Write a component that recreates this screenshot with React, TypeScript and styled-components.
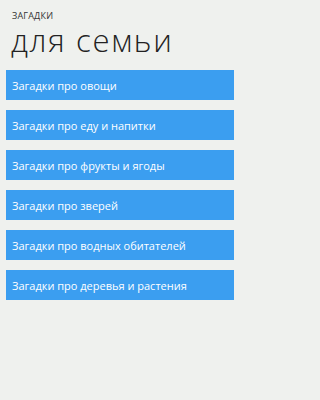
import styled, { createGlobalStyle } from "styled-components";

const GlobalStyle = createGlobalStyle`
  html, body {
    margin: 0;
    padding: 0;
    background: #eff1ee;
  }
`;

const topics = [
  "Загадки про овощи",
  "Загадки про еду и напитки",
  "Загадки про фрукты и ягоды",
  "Загадки про зверей",
  "Загадки про водных обитателей",
  "Загадки про деревья и растения",
];

const App = () => {
  return (
    <Page>
      <GlobalStyle />
      <Header>
        <AppTitle>ЗАГАДКИ</AppTitle>
        <PageTitle>для семьи</PageTitle>
      </Header>
      <List>
        {topics.map((t) => (
          <TopicButton key={t}>{t}</TopicButton>
        ))}
      </List>
    </Page>
  );
};

const Page = styled.div`
  width: 240px;
  height: 400px;
  box-sizing: border-box;
  background: #eff1ee;
  font-family: "Open Sans", "Noto Sans", sans-serif;
  display: flex;
  flex-direction: column;
`;

const Header = styled.div`
  display: flex;
  flex-direction: column;
  padding: 11px 0 0 12px;
`;

const AppTitle = styled.div`
  font-size: 9px;
  line-height: 10px;
  color: #333;
  letter-spacing: 0.2px;
`;

const PageTitle = styled.div`
  font-size: 31px;
  font-weight: 300;
  line-height: 30px;
  margin-top: 4px;
  color: #222;
  margin-left: -1px;
  letter-spacing: 1.7px;
`;

const List = styled.div`
  display: flex;
  flex-direction: column;
  gap: 10px;
  padding: 15px 6px 0;
`;

const TopicButton = styled.div`
  height: 30px;
  background: #3b9ef0;
  color: #fff;
  font-size: 11px;
  display: flex;
  align-items: center;
  padding-left: 6px;
`;

export default App;
